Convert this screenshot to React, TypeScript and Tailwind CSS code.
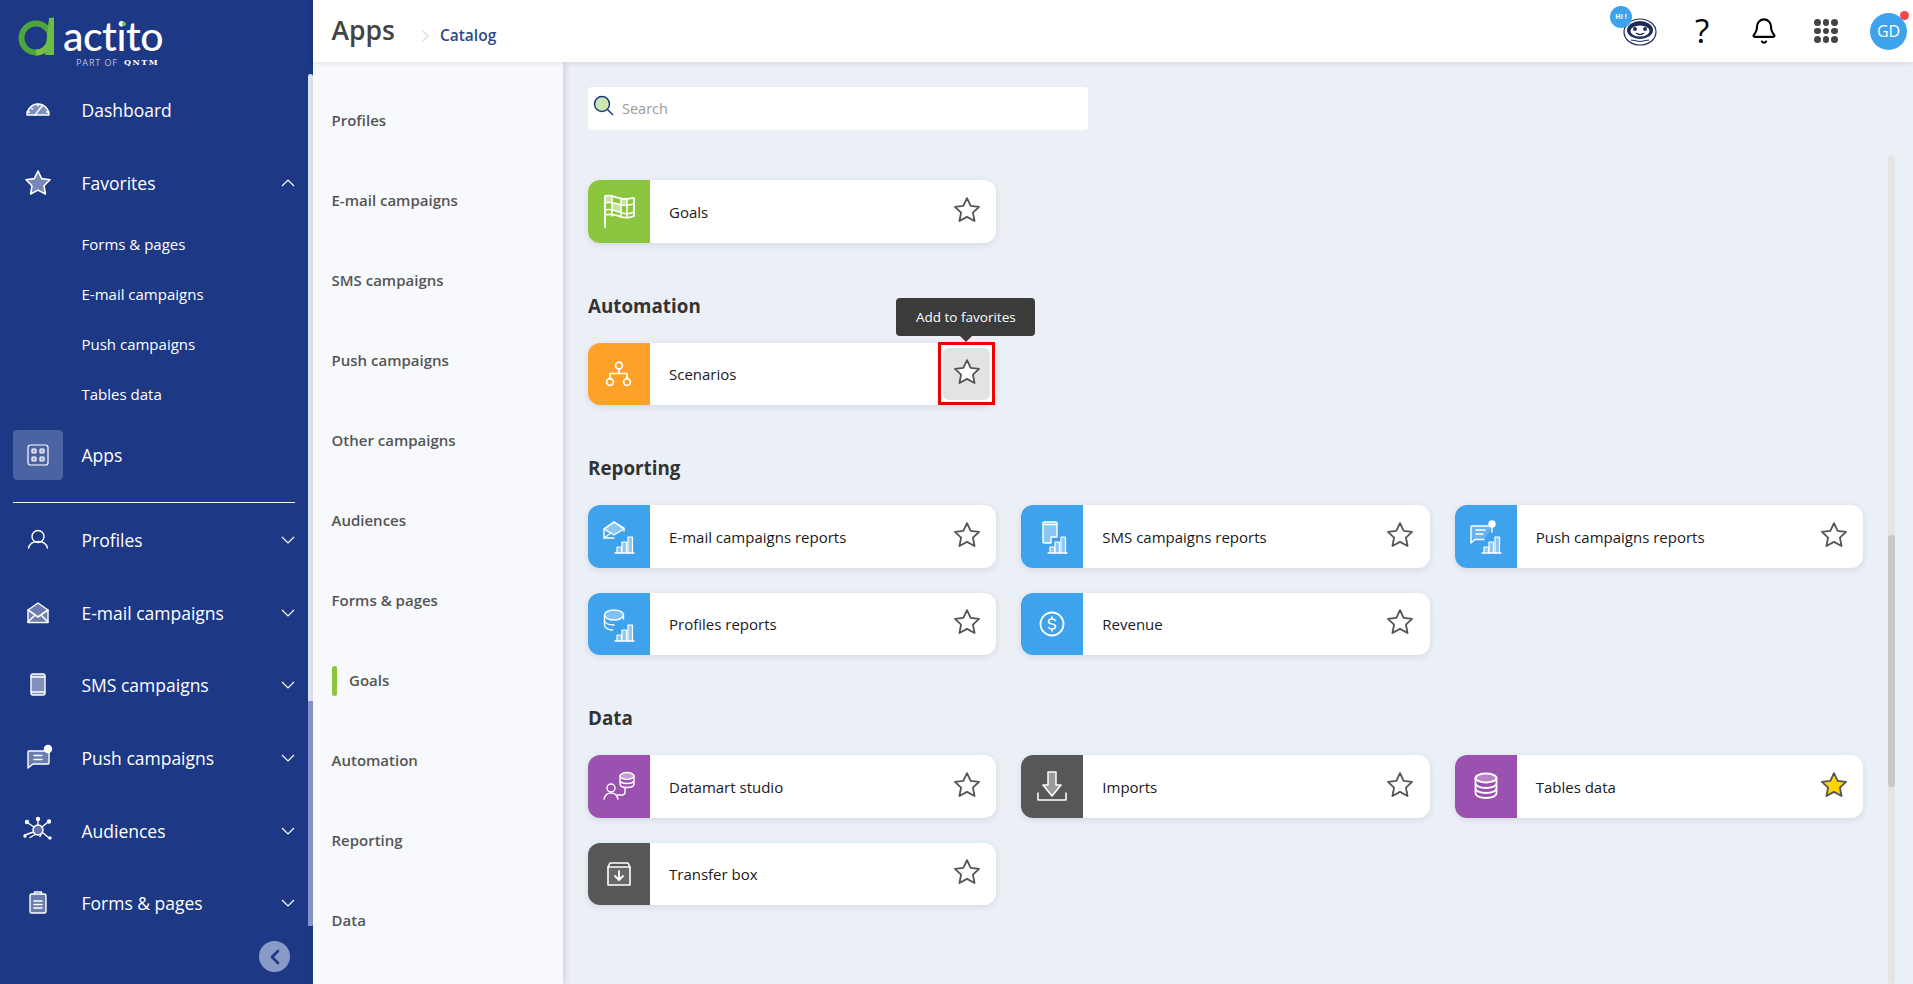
import React from "react"
import { Bell } from "lucide-react"

const Chevron = ({ up }: { up?: boolean }) => (
  <svg width="14" height="8" viewBox="0 0 14 8" fill="none" stroke="#fff" strokeWidth="1.2" className="shrink-0">
    <path d={up ? "M1 7l6-6 6 6" : "M1 1l6 6 6-6"} />
  </svg>
)

const NavSvg = ({ children }: { children: React.ReactNode }) => (
  <svg width="32" height="32" viewBox="0 0 32 32" fill="none" stroke="#fff" strokeWidth="1.4" strokeLinejoin="round" strokeLinecap="round" className="shrink-0">
    {children}
  </svg>
)

const navIcons: Record<string, React.ReactNode> = {
  dashboard: (
    <g transform="translate(0,-3)">
      <path d="M5 24a11 11 0 1 1 22 0z" fill="#fff" fillOpacity=".45" />
      <path d="M13 24l7-9M16 13v2M9 17l1.500 1M5 21h2.500M24.500 21H27" />
    </g>
  ),
  star: <path d="M16 4l3.700 7.600 8.300 1.200-6 5.900 1.400 8.300-7.400-3.900-7.400 3.900 1.400-8.300-6-5.900 8.300-1.200z" fill="#fff" fillOpacity=".4" strokeWidth="1.6" />,
  profile: (
    <>
      <circle cx="16" cy="12.500" r="6" />
      <path d="M6.500 24c1-4 4.500-6.500 9.500-6.500s8.500 2.500 9.500 6.500" />
    </>
  ),
  mail: (
    <>
      <path d="M6 13l10-7 10 7v12.500H6z" fill="#fff" fillOpacity=".35" />
      <path d="M6 13l10 7 10-7M6 25l7-7M26 25l-7-7" strokeWidth="1.6" />
    </>
  ),
  phone: (
    <>
      <rect x="9" y="5" width="14" height="21" rx="2" fill="#fff" fillOpacity=".45" />
      <path d="M9 8h14M9 23h14" />
    </>
  ),
  push: (
    <>
      <path d="M27 9v12a1 1 0 0 1-1 1H11l-5 4V10a1 1 0 0 1 1-1z" fill="#fff" fillOpacity=".35" />
      <path d="M12 13.500h8M12 17.500h8" />
      <circle cx="26" cy="7" r="3.500" fill="#fff" />
    </>
  ),
  audience: (
    <>
      <circle cx="16" cy="15" r="5" fill="#fff" fillOpacity=".3" />
      <path d="M16 10V5M12 12L6 8M20 12l6-5M11.500 17L3 20M20.500 17.500L27 23M13 19.500l-5 3M19 19.500l-1 2" />
      <circle cx="16" cy="4" r="1.500" fill="#fff" />
      <circle cx="5" cy="7" r="1.500" fill="#fff" />
      <circle cx="27" cy="6.500" r="1.500" fill="#fff" />
      <circle cx="3" cy="21" r="1" fill="#fff" />
      <circle cx="28" cy="23" r="1" fill="#fff" />
    </>
  ),
  form: (
    <>
      <rect x="8" y="7" width="16" height="19" rx="1.500" fill="#fff" fillOpacity=".35" />
      <path d="M12.500 7V5h7v2M12 14h8M12 17.500h8M12 21h8" />
    </>
  ),
}

const MainItem = ({ icon, label, noChevron }: { icon: string; label: string; noChevron?: boolean }) => (
  <div className="flex h-[72.6px] items-center pl-[22px] pr-[18px]">
    <NavSvg>{navIcons[icon]}</NavSvg>
    <span className="ml-[27.500px] flex-1 text-[17.500px] text-white">{label}</span>
    {!noChevron && <Chevron />}
  </div>
)

const Sidebar = () => (
  <aside className="relative h-full w-[313px] shrink-0 overflow-hidden bg-[#1d3885]">
    <div className="relative h-[74px]">
      <svg width="38" height="40" viewBox="0 0 38 40" className="absolute left-[18px] top-[17px]">
        <circle cx="18" cy="21" r="14.500" fill="none" stroke="#4ea53c" strokeWidth="6" />
        <path d="M18 35.500A14.500 14.500 0 0 0 32 24" fill="none" stroke="#7ac143" strokeWidth="6" />
        <path d="M31 1l5-.5V38h-9z" fill="#6cbd45" />
      </svg>
      <span className="absolute left-[63px] top-[16px] font-['Lato'] text-[41px] font-medium leading-[40px] tracking-[-0.5px] text-white">actito</span>
      <span className="absolute left-[122px] top-[22px] h-[4px] w-[4px] rounded-full bg-[#7ac143]" />
      <span className="absolute left-[76px] top-[56px] flex items-center text-[9px] leading-[13px] tracking-[0.9px] text-[#b6c0dc]">
        PART OF <b className="ml-[6px] font-['DejaVu_Serif'] text-[8px] font-bold tracking-[1.5px] text-white">QNTM</b>
      </span>
    </div>
    <MainItem icon="dashboard" label="Dashboard" noChevron />
    <div className="flex h-[73.4px] items-center pl-[22px] pr-[18px]">
      <NavSvg>{navIcons.star}</NavSvg>
      <span className="ml-[27.500px] flex-1 text-[17.500px] text-white">Favorites</span>
      <Chevron up />
    </div>
    {["Forms & pages", "E-mail campaigns", "Push campaigns", "Tables data"].map((t) => (
      <div key={t} className="flex h-[50px] items-center pb-[2px] pl-[81.500px] text-[15px] text-white">{t}</div>
    ))}
    <div className="ml-[13px] mt-[10px] flex h-[50px] items-center">
      <div className="flex h-[50px] w-[50px] items-center justify-center rounded-[4px] bg-[#4b63a3]">
        <svg width="22" height="22" viewBox="0 0 22 22" fill="none" stroke="#fff" strokeWidth="1.200">
          <rect x="1" y="1" width="20" height="20" rx="2.500" />
          <rect x="5" y="5" width="4" height="4" rx=".8" fill="#9aa8d0" />
          <rect x="13" y="5" width="4" height="4" rx=".8" fill="#9aa8d0" />
          <rect x="5" y="13" width="4" height="4" rx=".8" fill="#9aa8d0" />
          <rect x="13" y="13" width="4" height="4" rx=".8" fill="#9aa8d0" />
        </svg>
      </div>
      <span className="ml-[18.500px] pt-[1px] text-[17.500px] text-white">Apps</span>
    </div>
    <div className="mb-[1px] ml-[13px] mt-[22px] h-px w-[282px] bg-white" />
    <MainItem icon="profile" label="Profiles" />
    <MainItem icon="mail" label="E-mail campaigns" />
    <MainItem icon="phone" label="SMS campaigns" />
    <MainItem icon="push" label="Push campaigns" />
    <MainItem icon="audience" label="Audiences" />
    <MainItem icon="form" label="Forms & pages" />

    {/* scrollbar + collapse */}
    <div className="absolute right-0 top-[74px] h-[852px] w-[5px] overflow-hidden rounded-[3px] bg-[#dfe4f0]">
      <div className="mt-[627px] h-[225px] w-full rounded-b-[3px] bg-[#8594c4]" />
    </div>
    <button className="absolute left-[259px] top-[941px] flex h-[31px] w-[31px] items-center justify-center rounded-full bg-[#8a9ac7]">
      <svg width="12" height="16" viewBox="0 0 12 16" fill="none" stroke="#1d3885" strokeWidth="2.600" strokeLinecap="round" strokeLinejoin="round">
        <path d="M9 2L3 8l6 6" />
      </svg>
    </button>
  </aside>
)

const Header = () => (
  <header className="relative z-20 flex h-[62px] shrink-0 items-center bg-white pl-[18.500px] pr-[6px] shadow-[0_1px_6px_rgba(0,0,0,0.1)]">
    <h1 className="mb-[2px] text-[26.500px] font-semibold leading-[32px] text-[#444]">Apps</h1>
    <svg width="8" height="12" viewBox="0 0 8 12" fill="none" stroke="#dcdcdc" strokeWidth="1.500" className="ml-[27px] mt-[9px]">
      <path d="M1 1l5 5-5 5" />
    </svg>
    <span className="ml-[10px] mt-[9px] text-[15.500px] font-semibold text-[#2b4a8c]">Catalog</span>
    <div className="ml-auto flex items-center">
      <div className="relative flex h-[44px] w-[62px] items-center justify-center">
        <svg width="34" height="30" viewBox="0 0 34 30" className="mt-[1px]">
          <ellipse cx="17" cy="15" rx="16" ry="13" fill="#fff" stroke="#1d2d55" strokeWidth="1.200" />
          <ellipse cx="17" cy="13" rx="13" ry="9" fill="#1d2d55" />
          <ellipse cx="17" cy="14" rx="9.500" ry="5.500" fill="#fff" />
          <circle cx="12" cy="12" r="2" fill="#1d2d55" />
          <circle cx="22" cy="12" r="2" fill="#1d2d55" />
          <path d="M13 16q4 3 8 0" fill="none" stroke="#1d2d55" strokeWidth="1.400" />
          <path d="M8 23q9 3 18 0" fill="none" stroke="#1d2d55" strokeWidth="1" />
        </svg>
        <span className="absolute left-[1px] top-[-3px] flex h-[22px] w-[22px] items-center justify-center rounded-full bg-[#3fa2ed] text-[7px] font-bold text-white">Hi !</span>
      </div>
      <div className="flex h-[44px] w-[62px] items-center justify-center pb-[1px] text-[33px] leading-none text-black">?</div>
      <div className="flex h-[44px] w-[62px] items-center justify-center">
        <Bell size={28} strokeWidth={1.800} color="#000" />
      </div>
      <div className="flex h-[44px] w-[62px] items-center justify-center">
        <div className="grid grid-cols-3 gap-[2px]">
          {Array.from({ length: 9 }).map((_, i) => (
            <span key={i} className="h-[6.500px] w-[6.500px] rounded-full bg-[#444]" />
          ))}
        </div>
      </div>
      <div className="relative ml-[13px] flex h-[37px] w-[37px] items-center justify-center rounded-full bg-[#3fa2ed] text-[16px] text-white">
        GD
        <span className="absolute right-[-2px] top-[-2px] h-[9px] w-[9px] rounded-full bg-[#f44848]" />
      </div>
    </div>
  </header>
)

const SubNav = () => (
  <nav className="relative z-10 h-full w-[250px] shrink-0 bg-[#f7f9fc] pl-[18.500px] pt-[18.500px] text-[15px] font-semibold text-[#555] shadow-[2px_0_6px_rgba(60,80,120,0.18)]">
    {["Profiles", "E-mail campaigns", "SMS campaigns", "Push campaigns", "Other campaigns", "Audiences", "Forms & pages"].map((t) => (
      <div key={t} className="flex h-[80px] items-center">{t}</div>
    ))}
    <div className="flex h-[80px] items-center">
      <span className="mr-[12.500px] h-[30px] w-[5px] rounded-[3px] bg-[#8cc63f]" />
      Goals
    </div>
    {["Automation", "Reporting", "Data"].map((t) => (
      <div key={t} className="flex h-[80px] items-center">{t}</div>
    ))}
  </nav>
)

const Bars = () => (
  <>
    <path d="M14 35h19" strokeWidth="1.300" />
    <path d="M16 35v-6h4.500v6M21 35V24h4.500v11M27 35V19h4.500v16" fill="#fff" fillOpacity=".4" strokeWidth="1.200" />
  </>
)

const cardIcons: Record<string, React.ReactNode> = {
  goals: (
    <>
      <path d="M4 34V3c9-2 12 3 19 3 4 0 8-1 10-1v18c-4 2-8 2-12 1-6-2-11-4-17-2" fill="none" strokeWidth="1.800" />
      <path d="M4 10c6-2 11 1 17 2 4 1 8 0 12-1M4 17c6-2 11 1 17 3 4 1 8 1 12-1M11 3v20M20 5v19M26 6v19" strokeWidth="1.500" />
      <path d="M4 4l7-1v6l-7 1zM20 6l6 0v5l-6 1zM11 10l9 2v7l-9-3z" fill="#fff" fillOpacity=".5" stroke="none" />
    </>
  ),
  scenarios: (
    <g strokeWidth="1.700">
      <circle cx="18" cy="9.500" r="3.400" />
      <circle cx="9" cy="26" r="3.400" />
      <circle cx="26" cy="26" r="3.400" />
      <path d="M18 13v4.500M9 22.500v-5h17v5" />
    </g>
  ),
  mailReport: (
    <>
      <path d="M3 11l10-7 10 6v3M3 11v9l10 0" fill="none" />
      <path d="M3 11l10-7 10 7-10 6z" fill="#fff" fillOpacity=".4" />
      <path d="M3 20l7-5" />
      <Bars />
    </>
  ),
  smsReport: (
    <>
      <path d="M11 25h-1a1 1 0 0 1-1-1V5a1 1 0 0 1 1-1h12a1 1 0 0 1 1 1v14h-6v6z" fill="#fff" fillOpacity=".4" />
      <path d="M9 6.500h14" />
      <Bars />
    </>
  ),
  pushReport: (
    <>
      <path d="M25 8H4a1 1 0 0 0-1 1v16l4-3.500h9" fill="#fff" fillOpacity=".2" />
      <path d="M8 12h9M8 16h7" strokeWidth="1.500" />
      <path d="M24 8v6" />
      <circle cx="24" cy="6" r="3" fill="#fff" />
      <Bars />
    </>
  ),
  profileReport: (
    <>
      <ellipse cx="13" cy="9" rx="9.500" ry="5" fill="#fff" fillOpacity=".35" />
      <path d="M3.500 9v5c0 3 4 5 9.500 5M22.500 9v4M3.500 14v5c0 3 4 5 8 5" />
      <Bars />
    </>
  ),
  revenue: (
    <>
      <circle cx="18" cy="18" r="11.500" strokeWidth="1.800" />
      <path d="M21.500 14.500c-.8-1-2-1.500-3.500-1.500-2 0-3.500 1-3.500 2.500s1.500 2.200 3.500 2.500 3.500 1 3.500 2.500-1.500 2.500-3.500 2.500c-1.500 0-2.700-.5-3.500-1.500M18 11v2M18 23v2" strokeWidth="1.600" />
    </>
  ),
  datamart: (
    <>
      <circle cx="10" cy="20" r="4" />
      <path d="M3 31c1-4 4-6 7-6s6 2 7 6" />
      <ellipse cx="26" cy="8" rx="7" ry="3.500" fill="#fff" fillOpacity=".45" />
      <path d="M19 8v8c0 2 3 3.500 7 3.500s7-1.500 7-3.500V8M19 12c0 2 3 3.500 7 3.500s7-1.500 7-3.500" />
      <path d="M24 20v4c0 2-1 3-3 3h-5" />
    </>
  ),
  imports: (
    <>
      <path d="M14 4h8v13h5L18 28 9 17h5z" fill="#fff" fillOpacity=".4" strokeWidth="1.500" />
      <path d="M4 25v7h28v-7" strokeWidth="1.500" />
    </>
  ),
  tables: (
    <>
      <ellipse cx="18" cy="10" rx="10.500" ry="4.500" fill="#fff" fillOpacity=".3" strokeWidth="1.800" />
      <path d="M7.500 10v15c0 3 4.500 5 10.500 5s10.500-2 10.500-5V10M7.500 15c0 3 4.500 5 10.500 5s10.500-2 10.500-5M7.500 20c0 3 4.500 5 10.500 5s10.500-2 10.500-5" strokeWidth="1.800" />
    </>
  ),
  transfer: (
    <>
      <path d="M7 11l2-4h18l2 4" strokeWidth="1.600" />
      <rect x="7" y="11" width="22" height="18" fill="#fff" fillOpacity=".1" strokeWidth="1.600" />
      <path d="M18 15v9M14 20l4 4 4-4" strokeWidth="1.800" />
    </>
  ),
}

const StarIcon = ({ on }: { on?: boolean }) => (
  <svg width="28" height="28" viewBox="0 0 26 26" fill={on ? "#ffd400" : "#fff"} stroke="#555" strokeWidth="1.700" strokeLinejoin="round">
    <path d="M13 2l3.400 7.100 7.800 1-5.700 5.400 1.500 7.700L13 19.400l-7 3.800 1.500-7.700L1.800 10.100l7.800-1z" />
  </svg>
)

type CardProps = { color: string; icon: string; label: string; on?: boolean; hover?: boolean }

const Card = ({ color, icon, label, on, hover }: CardProps) => (
  <div className="relative flex h-[62.500px] items-center rounded-[12px] bg-white shadow-[0_2px_6px_rgba(40,50,80,0.12)]">
    <div className={`flex h-full w-[62px] shrink-0 items-center justify-center rounded-l-[12px] ${color}`}>
      <svg width="36" height="36" viewBox="0 0 36 36" fill="none" stroke="#fff" strokeWidth="1.400" strokeLinecap="round" strokeLinejoin="round">
        {cardIcons[icon]}
      </svg>
    </div>
    <span className="ml-[19px] flex-1 pt-[1px] text-[15px] text-[#1a1a1a]">{label}</span>
    <div className={`relative mr-[6px] flex h-[52px] w-[47px] items-center justify-center rounded-[6px] pb-[3px] ${hover ? "bg-[#e3e3e3]" : ""}`}>
      <StarIcon on={on} />
      {hover && (
        <>
          <span className="absolute left-[-5px] top-[-6px] h-[63px] w-[57px] border-[3px] border-[#f00000]" />
          <div className="absolute left-[-47px] top-[-50px] z-10 flex h-[38px] w-[139px] items-center justify-center rounded-[4px] bg-[#3a3b3a] text-[13.500px] text-white">
            Add to favorites
            <span className="absolute left-[64px] top-[38px] h-0 w-0 border-x-[6px] border-t-[6px] border-x-transparent border-t-[#3a3b3a]" />
          </div>
        </>
      )}
    </div>
  </div>
)

const Section = ({ title, children }: { title: string; children: React.ReactNode }) => (
  <section className="mt-[51px]">
    <h2 className="mb-[25px] h-[24px] text-[18.800px] font-bold leading-[24px] text-[#333]">{title}</h2>
    <div className="grid grid-cols-3 gap-[25px]">{children}</div>
  </section>
)

const Main = () => (
  <main className="relative h-full flex-1 overflow-hidden bg-[#ebf0f7] pl-[25px] pr-[50px] pt-[25px]">
    <div className="flex h-[43px] w-[500px] items-center rounded-[4px] bg-white pl-[5px]">
      <svg width="22" height="22" viewBox="0 0 22 22" className="mb-[6px] shrink-0">
        <circle cx="9" cy="9" r="7.500" fill="#cfe7b0" stroke="#1d3885" strokeWidth="1.500" />
        <path d="M14.500 14.500l5.500 5.500" stroke="#1d3885" strokeWidth="1.500" />
      </svg>
      <span className="ml-[7px] text-[14.500px] text-[#9a9a9a]">Search</span>
    </div>
    <div className="mt-[50px] grid grid-cols-3 gap-[25px]">
      <Card color="bg-[#8cc63f]" icon="goals" label="Goals" />
    </div>
    <Section title="Automation">
      <Card color="bg-[#fda128]" icon="scenarios" label="Scenarios" hover />
    </Section>
    <Section title="Reporting">
      <Card color="bg-[#3fa2ed]" icon="mailReport" label="E-mail campaigns reports" />
      <Card color="bg-[#3fa2ed]" icon="smsReport" label="SMS campaigns reports" />
      <Card color="bg-[#3fa2ed]" icon="pushReport" label="Push campaigns reports" />
      <Card color="bg-[#3fa2ed]" icon="profileReport" label="Profiles reports" />
      <Card color="bg-[#3fa2ed]" icon="revenue" label="Revenue" />
    </Section>
    <Section title="Data">
      <Card color="bg-[#9b51b0]" icon="datamart" label="Datamart studio" />
      <Card color="bg-[#575757]" icon="imports" label="Imports" />
      <Card color="bg-[#9b51b0]" icon="tables" label="Tables data" on />
      <Card color="bg-[#575757]" icon="transfer" label="Transfer box" />
    </Section>
    <div className="absolute left-[1325px] top-[93px] h-[829px] w-[7px] rounded-[3px] bg-[#e4e4e4]">
      <div className="mt-[380px] h-[252px] w-full rounded-[3px] bg-[#c8c8c8]" />
    </div>
  </main>
)

export default function App() {
  return (
    <div className="flex h-screen w-full overflow-hidden font-['Open_Sans',sans-serif]">
      <Sidebar />
      <div className="flex h-full min-w-0 flex-1 flex-col">
        <Header />
        <div className="flex min-h-0 flex-1">
          <SubNav />
          <Main />
        </div>
      </div>
    </div>
  )
}
